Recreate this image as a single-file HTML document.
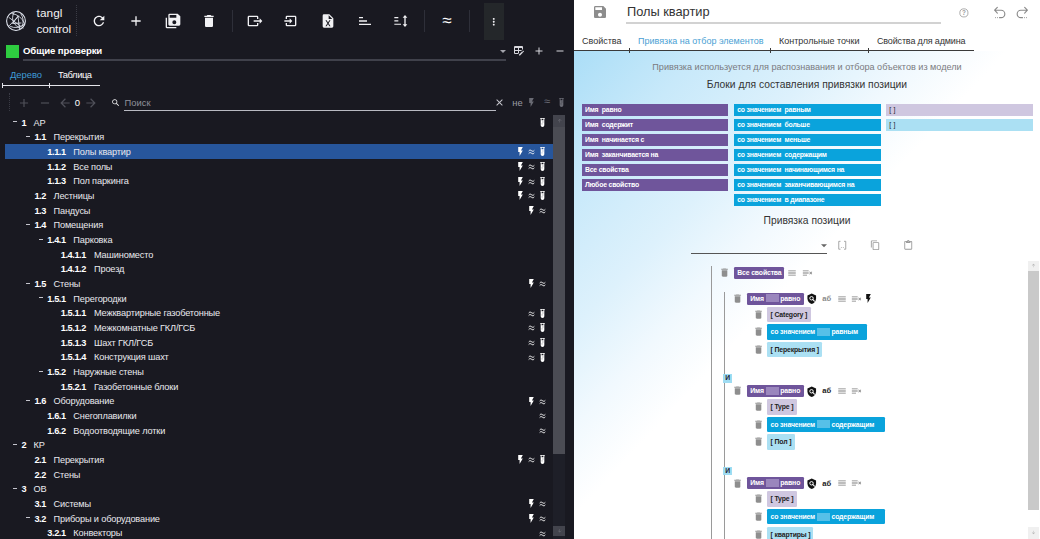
<!DOCTYPE html>
<html lang="ru">
<head>
<meta charset="utf-8">
<title>tangl control</title>
<style>
*{box-sizing:border-box;margin:0;padding:0}
html,body{width:1040px;height:539px;overflow:hidden;background:#191921;font-family:"Liberation Sans",sans-serif;}
.abs{position:absolute}
#left{position:absolute;left:0;top:0;width:574px;height:539px;background:#191921;color:#fff;overflow:hidden}
#right{position:absolute;left:574px;top:0;width:466px;height:539px;background:#fff;overflow:hidden;color:#222}
svg{position:absolute;display:block;overflow:visible}
/* left header */
.logo-t{position:absolute;left:36.5px;font-size:11.8px;color:#f2f2f2;letter-spacing:.1px;line-height:14px;white-space:nowrap}
.vsep{position:absolute;top:10px;width:1px;height:22px;background:#2e2f39}
.tb{position:absolute;top:11px;width:20px;height:20px}
.title{position:absolute;left:23px;top:44.100px;letter-spacing:-.1px;font-size:9.600px;font-weight:bold;color:#fff;line-height:13px;white-space:nowrap}
.tab{position:absolute;top:69.300px;font-size:9.4px;line-height:12px;white-space:nowrap}
/* tree */
.row{position:absolute;left:5px;width:549px;height:14.667px;letter-spacing:-.15px;font-size:9.200px;line-height:14.667px;color:#e9e9ee;white-space:nowrap}
.selbg{position:absolute;left:5px;width:549px;height:15.500px;background:#27569c}
.row b{position:absolute;top:0;margin-left:-5px;font-weight:bold;color:#fff;font-size:9.200px;letter-spacing:-.4px}
.row .lb{position:absolute;top:0;margin-left:-5px;}
.row .ex{position:absolute;top:5.900px;margin-left:-5px;width:4.200px;height:1px;background:#c4c4cc}
.row .ri{top:1.500px;width:11px;height:11px}
.row .ra{position:absolute;top:-.5px;width:11px;text-align:center;font-size:11px;color:#fff}
</style>
</head>
<body>
<div id="left">
  <!-- logo -->
  <svg style="left:5.900px;top:11px;width:20px;height:20px" viewBox="0 0 40 40" fill="none" stroke="#e4e8f2" stroke-width="2.100" stroke-linecap="round">
    <circle cx="20" cy="20" r="18.800"/>
    <path stroke-width="1.700" d="M6 13 L34 34 M7 29 L25 10 M24 11 L13 25 L30 24 M24 11 L27 36 M12 5 Q30 8 37 25 M9 31 Q22 37 36 27 M16 3 Q10 14 16 24 Q20 32 30 35 M30 6 Q37 16 33 30"/>
  </svg>
  <div class="logo-t" style="top:5.800px">tangl</div>
  <div class="logo-t" style="top:21.800px;letter-spacing:-.15px">control</div>
  <div class="abs" style="left:76px;top:5px;width:0;height:31px;border-left:1px dotted #3a3b45"></div>

  <!-- toolbar icons -->
  <svg class="tb" style="left:91px;top:13.100px;width:16px;height:16px" viewBox="0 0 24 24"><path fill="#f1f1f4" d="M17.65 6.35C16.2 4.9 14.21 4 12 4c-4.42 0-7.99 3.58-7.99 8s3.57 8 7.99 8c3.730 0 6.84-2.550 7.730-6h-2.080c-.82 2.330-3.040 4-5.650 4-3.310 0-6-2.690-6-6s2.690-6 6-6c1.660 0 3.140.69 4.220 1.780L13 11h7V4l-2.350 2.350z"/></svg>
  <svg class="tb" style="left:128px;top:13.100px;width:16px;height:16px" viewBox="0 0 24 24"><path fill="#f1f1f4" d="M19 13h-6v6h-2v-6H5v-2h6V5h2v6h6v2z"/></svg>
  <svg class="tb" style="left:164.5px;top:13.100px;width:16px;height:16px" viewBox="0 0 24 24"><path fill="#f1f1f4" d="M17,7V3H7V7H17M14,17A3,3 0 0,0 17,14A3,3 0 0,0 14,11A3,3 0 0,0 11,14A3,3 0 0,0 14,17M19,1L23,5V17A2,2 0 0,1 21,19H7C5.89,19 5,18.1 5,17V3A2,2 0 0,1 7,1H19M1,7H3V21H17V23H3A2,2 0 0,1 1,21V7Z"/></svg>
  <svg class="tb" style="left:201px;top:13.100px;width:16px;height:16px" viewBox="0 0 24 24"><path fill="#f1f1f4" d="M6 19c0 1.100.9 2 2 2h8c1.100 0 2-.9 2-2V7H6v12zM19 4h-3.500l-1-1h-5l-1 1H5v2h14V4z"/></svg>
  <div class="vsep" style="left:232px"></div>
  <svg class="tb" style="left:247px;top:13.100px;width:16px;height:16px" viewBox="0 0 24 24"><path fill="#f1f1f4" d="M23,12L19,8V11H10V13H19V16M1,18V6C1,4.89 1.9,4 3,4H15A2,2 0 0,1 17,6V9H15V6H3V18H15V15H17V18A2,2 0 0,1 15,20H3A2,2 0 0,1 1,18Z"/></svg>
  <svg class="tb" style="left:283px;top:13.100px;width:16px;height:16px" viewBox="0 0 24 24"><path fill="#f1f1f4" d="M14,12L10,8V11H2V13H10V16M20,18V6C20,4.89 19.1,4 18,4H6A2,2 0 0,0 4,6V9H6V6H18V18H6V15H4V18A2,2 0 0,0 6,20H18A2,2 0 0,0 20,18Z"/></svg>
  <svg class="tb" style="left:320px;top:13.100px;width:16px;height:16px" viewBox="0 0 24 24"><path fill="#f1f1f4" d="M14,2H6A2,2 0 0,0 4,4V20A2,2 0 0,0 6,22H18A2,2 0 0,0 20,20V8L14,2M15.8,20H14L12,16.6L10,20H8.2L11.1,15.5L8.2,11H10L12,14.4L14,11H15.8L12.9,15.5L15.8,20M13,9V3.5L18.5,9H13Z"/></svg>
  <svg class="tb" style="left:356.500px;top:13.100px;width:16px;height:16px" viewBox="0 0 24 24"><path fill="#f1f1f4" d="M3 6H9V8H3ZM3 11H15V13H3ZM3 16H21V18H3Z"/></svg>
  <svg class="tb" style="left:393px;top:13.100px;width:16px;height:16px" viewBox="0 0 24 24"><path fill="#f1f1f4" d="M2 6H8V7.800H2ZM2 11H8V12.800H2ZM2 16H12V17.800H2ZM18 3L21.500 7H19V17H21.500L18 21L14.500 17H17V7H14.500Z"/></svg>
  <div class="vsep" style="left:424px"></div>
  <div class="abs" style="left:437px;top:10.900px;width:20px;height:20px;line-height:20px;text-align:center;font-size:17px;color:#fff">≈</div>
  <div class="vsep" style="left:469px"></div>
  <div class="abs" style="left:483.500px;top:2.500px;width:20.500px;height:37px;background:#24272a"></div>
  <svg class="tb" style="left:488.100px;top:15.500px;width:11.500px;height:11.500px" viewBox="0 0 24 24"><path fill="#f1f1f4" d="M12 8c1.100 0 2-.9 2-2s-.9-2-2-2-2 .9-2 2 .9 2 2 2zm0 2c-1.100 0-2 .9-2 2s.9 2 2 2 2-.9 2-2-.9-2-2-2zm0 6c-1.100 0-2 .9-2 2s.9 2 2 2 2-.9 2-2-.9-2-2-2z"/></svg>

  <!-- second row -->
  <div class="abs" style="left:6px;top:44.700px;width:13.300px;height:13.300px;background:#2ecc40"></div>
  <div class="title">Общие проверки</div>
  <div class="abs" style="left:23px;top:59.300px;width:483px;height:1.500px;background:#40414b"></div>
  <svg style="left:500.300px;top:49.600px;width:6px;height:3.200px" viewBox="0 0 10 5"><path fill="#a4a4ac" d="M0 0h10L5 5z"/></svg>
  <svg style="left:512.500px;top:45px;width:12px;height:12px" viewBox="0 0 24 24"><path fill="#d8d8de" d="M21.7,13.350L20.700,14.350L18.650,12.300L19.650,11.300C19.860,11.080 20.210,11.080 20.420,11.300L21.700,12.580C21.920,12.790 21.920,13.140 21.700,13.350M12,18.940L18.070,12.880L20.120,14.930L14.060,21H12V18.940M4,2H18A2,2 0 0,1 20,4V8.170L16.170,12H12V16.170L10.170,18H4A2,2 0 0,1 2,16V4A2,2 0 0,1 4,2M4,6V10H10V6H4M12,6V10H18V6H12M4,12V16H10V12H4Z"/></svg>
  <svg style="left:532.500px;top:45px;width:12px;height:12px" viewBox="0 0 24 24"><path fill="#d8d8de" d="M19 13h-6v6h-2v-6H5v-2h6V5h2v6h6v2z"/></svg>
  <svg style="left:554px;top:45px;width:12px;height:12px" viewBox="0 0 24 24"><path fill="#d8d8de" d="M19 13H5v-2h14v2z"/></svg>

  <!-- tabs -->
  <div class="tab" style="left:10px;color:#3f9bd6">Дерево</div>
  <div class="tab" style="left:58px;color:#fff;letter-spacing:-.45px">Таблица</div>
  <div class="abs" style="left:2px;top:85px;width:97.500px;height:1px;background:#e4e4ea"></div>
  <div class="abs" style="left:2px;top:83px;width:1px;height:5px;background:#e4e4ea"></div>
  <div class="abs" style="left:49px;top:83px;width:1px;height:5px;background:#e4e4ea"></div>

  <!-- tree toolbar -->
  <div class="abs" style="left:9px;top:93px;width:0;height:18px;border-left:1px dotted #3a3b45"></div>
  <svg style="left:17px;top:95.700px;width:14px;height:14px" viewBox="0 0 24 24"><path fill="#50515a" d="M19 13h-6v6h-2v-6H5v-2h6V5h2v6h6v2z"/></svg>
  <svg style="left:37.500px;top:95.700px;width:14px;height:14px" viewBox="0 0 24 24"><path fill="#50515a" d="M19 13H5v-2h14v2z"/></svg>
  <svg style="left:57.500px;top:95.700px;width:14px;height:14px" viewBox="0 0 24 24"><path fill="#50515a" d="M20 11H7.830l5.590-5.590L12 4l-8 8 8 8 1.410-1.410L7.830 13H20v-2z"/></svg>
  <div class="abs" style="left:72.300px;top:96.800px;width:10px;text-align:center;font-size:9.500px;line-height:12px;color:#fff">0</div>
  <svg style="left:83.500px;top:95.700px;width:14px;height:14px" viewBox="0 0 24 24"><path fill="#50515a" d="M12 4l-1.410 1.410L16.170 11H4v2h12.170l-5.580 5.590L12 20l8-8z"/></svg>
  <svg style="left:110.500px;top:98.200px;width:9.500px;height:9.500px" viewBox="0 0 24 24"><path fill="#f1f1f4" d="M15.500 14h-.79l-.28-.27C15.410 12.590 16 11.110 16 9.500 16 5.910 13.090 3 9.500 3S3 5.910 3 9.500 5.910 16 9.500 16c1.610 0 3.090-.59 4.230-1.570l.27.28v.79l5 4.990L20.490 19l-4.990-5zm-6 0C7.010 14 5 11.990 5 9.500S7.010 5 9.500 5 14 7.010 14 9.500 11.990 14 9.500 14z"/></svg>
  <div class="abs" style="left:124.500px;top:96.900px;font-size:9.400px;line-height:12px;color:#8f909a">Поиск</div>
  <div class="abs" style="left:124px;top:109.500px;width:371.500px;height:1px;background:#b9bac2"></div>
  <svg style="left:493.500px;top:97.100px;width:11px;height:11px" viewBox="0 0 24 24"><path fill="#c9c9d0" d="M19 6.410L17.590 5 12 10.590 6.410 5 5 6.410 10.590 12 5 17.590 6.410 19 12 13.410 17.590 19 19 17.590 13.410 12z"/></svg>
  <div class="abs" style="left:512.300px;top:97px;font-size:9.400px;line-height:12px;color:#9a9ba4">не</div>
  <svg style="left:526px;top:96.500px;width:11px;height:11px" viewBox="0 0 24 24"><path fill="#6a6b74" d="M7 2v11h3v9l7-12h-4l4-8z"/></svg>
  <div class="abs" style="left:541.500px;top:95px;width:11px;text-align:center;font-size:11px;line-height:12px;color:#6a6b74">≈</div>
  <svg style="left:555.500px;top:96.500px;width:11px;height:11px" viewBox="0 0 24 24"><path fill="#6a6b74" d="M7,2V4H8V18A4,4 0 0,0 12,22A4,4 0 0,0 16,18V4H17V2H7M11,16C10.400,16 10,15.600 10,15C10,14.400 10.400,14 11,14C11.600,14 12,14.400 12,15C12,15.600 11.600,16 11,16M13,12C12.400,12 12,11.600 12,11C12,10.400 12.400,10 13,10C13.600,10 14,10.400 14,11C14,11.600 13.600,12 13,12M14,7H10V4H14V7Z"/></svg>

  <!-- tree -->
<div class="row" style="top:115.50px"><i class="ex" style="left:13.0px"></i><b style="left:21.6px">1</b><span class="lb" style="left:33.5px">АР</span><svg class="ri" style="left:532.2px" viewBox="0 0 24 24"><path fill="#fff" d="M7,2V4H8V18A4,4 0 0,0 12,22A4,4 0 0,0 16,18V4H17V2H7M11,16C10.4,16 10,15.6 10,15C10,14.4 10.4,14 11,14C11.6,14 12,14.4 12,15C12,15.6 11.6,16 11,16M13,12C12.4,12 12,11.6 12,11C12,10.4 12.4,10 13,10C13.6,10 14,10.4 14,11C14,11.6 13.6,12 13,12M14,7H10V4H14V7Z"/></svg></div>
<div class="row" style="top:130.17px"><i class="ex" style="left:25.5px"></i><b style="left:34.4px">1.1</b><span class="lb" style="left:53.5px">Перекрытия</span></div>
<div class="selbg" style="top:143.98px"></div><div class="row" style="top:144.83px"><b style="left:47.3px">1.1.1</b><span class="lb" style="left:73.3px">Полы квартир</span><svg class="ri" style="left:510.2px" viewBox="0 0 24 24"><path fill="#fff" d="M7 2v11h3v9l7-12h-4l4-8z"/></svg><svg class="ri" style="left:521.2px" viewBox="0 0 11 11" fill="none" stroke="#fff" stroke-width=".950"><path d="M2.700 5C3.500 3.900 4.500 3.900 5.500 4.700S7.500 5.500 8.300 4.400M2.700 7.500C3.500 6.400 4.500 6.400 5.500 7.200S7.500 8 8.300 6.900"/></svg><svg class="ri" style="left:532.2px" viewBox="0 0 24 24"><path fill="#fff" d="M7,2V4H8V18A4,4 0 0,0 12,22A4,4 0 0,0 16,18V4H17V2H7M11,16C10.4,16 10,15.6 10,15C10,14.4 10.4,14 11,14C11.6,14 12,14.4 12,15C12,15.6 11.6,16 11,16M13,12C12.4,12 12,11.6 12,11C12,10.4 12.4,10 13,10C13.6,10 14,10.4 14,11C14,11.6 13.6,12 13,12M14,7H10V4H14V7Z"/></svg></div>
<div class="row" style="top:159.50px"><b style="left:47.3px">1.1.2</b><span class="lb" style="left:73.3px">Все полы</span><svg class="ri" style="left:510.2px" viewBox="0 0 24 24"><path fill="#fff" d="M7 2v11h3v9l7-12h-4l4-8z"/></svg><svg class="ri" style="left:521.2px" viewBox="0 0 11 11" fill="none" stroke="#fff" stroke-width=".950"><path d="M2.700 5C3.500 3.900 4.500 3.900 5.500 4.700S7.500 5.500 8.300 4.400M2.700 7.500C3.500 6.400 4.500 6.400 5.500 7.200S7.500 8 8.300 6.900"/></svg><svg class="ri" style="left:532.2px" viewBox="0 0 24 24"><path fill="#fff" d="M7,2V4H8V18A4,4 0 0,0 12,22A4,4 0 0,0 16,18V4H17V2H7M11,16C10.4,16 10,15.6 10,15C10,14.4 10.4,14 11,14C11.6,14 12,14.4 12,15C12,15.6 11.6,16 11,16M13,12C12.4,12 12,11.6 12,11C12,10.4 12.4,10 13,10C13.6,10 14,10.4 14,11C14,11.6 13.6,12 13,12M14,7H10V4H14V7Z"/></svg></div>
<div class="row" style="top:174.17px"><b style="left:47.3px">1.1.3</b><span class="lb" style="left:73.3px">Пол паркинга</span><svg class="ri" style="left:510.2px" viewBox="0 0 24 24"><path fill="#fff" d="M7 2v11h3v9l7-12h-4l4-8z"/></svg><svg class="ri" style="left:521.2px" viewBox="0 0 11 11" fill="none" stroke="#fff" stroke-width=".950"><path d="M2.700 5C3.500 3.900 4.500 3.900 5.500 4.700S7.500 5.500 8.300 4.400M2.700 7.500C3.500 6.400 4.500 6.400 5.500 7.200S7.500 8 8.300 6.900"/></svg><svg class="ri" style="left:532.2px" viewBox="0 0 24 24"><path fill="#fff" d="M7,2V4H8V18A4,4 0 0,0 12,22A4,4 0 0,0 16,18V4H17V2H7M11,16C10.4,16 10,15.6 10,15C10,14.4 10.4,14 11,14C11.6,14 12,14.4 12,15C12,15.6 11.6,16 11,16M13,12C12.4,12 12,11.6 12,11C12,10.4 12.4,10 13,10C13.6,10 14,10.4 14,11C14,11.6 13.6,12 13,12M14,7H10V4H14V7Z"/></svg></div>
<div class="row" style="top:188.83px"><b style="left:34.4px">1.2</b><span class="lb" style="left:53.5px">Лестницы</span><svg class="ri" style="left:510.2px" viewBox="0 0 24 24"><path fill="#fff" d="M7 2v11h3v9l7-12h-4l4-8z"/></svg><svg class="ri" style="left:521.2px" viewBox="0 0 11 11" fill="none" stroke="#fff" stroke-width=".950"><path d="M2.700 5C3.500 3.900 4.500 3.900 5.500 4.700S7.500 5.500 8.300 4.400M2.700 7.500C3.500 6.400 4.500 6.400 5.500 7.200S7.500 8 8.300 6.900"/></svg><svg class="ri" style="left:532.2px" viewBox="0 0 24 24"><path fill="#fff" d="M7,2V4H8V18A4,4 0 0,0 12,22A4,4 0 0,0 16,18V4H17V2H7M11,16C10.4,16 10,15.6 10,15C10,14.4 10.4,14 11,14C11.6,14 12,14.4 12,15C12,15.6 11.6,16 11,16M13,12C12.4,12 12,11.6 12,11C12,10.4 12.4,10 13,10C13.6,10 14,10.4 14,11C14,11.6 13.6,12 13,12M14,7H10V4H14V7Z"/></svg></div>
<div class="row" style="top:203.50px"><b style="left:34.4px">1.3</b><span class="lb" style="left:53.5px">Пандусы</span><svg class="ri" style="left:521.2px" viewBox="0 0 24 24"><path fill="#fff" d="M7 2v11h3v9l7-12h-4l4-8z"/></svg><svg class="ri" style="left:532.2px" viewBox="0 0 11 11" fill="none" stroke="#fff" stroke-width=".950"><path d="M2.700 5C3.500 3.900 4.500 3.900 5.500 4.700S7.500 5.500 8.300 4.400M2.700 7.500C3.500 6.400 4.500 6.400 5.500 7.200S7.500 8 8.300 6.900"/></svg></div>
<div class="row" style="top:218.17px"><i class="ex" style="left:25.5px"></i><b style="left:34.4px">1.4</b><span class="lb" style="left:53.5px">Помещения</span></div>
<div class="row" style="top:232.84px"><i class="ex" style="left:38.5px"></i><b style="left:47.3px">1.4.1</b><span class="lb" style="left:73.3px">Парковка</span></div>
<div class="row" style="top:247.50px"><b style="left:60.7px">1.4.1.1</b><span class="lb" style="left:94.0px">Машиноместо</span></div>
<div class="row" style="top:262.17px"><b style="left:60.7px">1.4.1.2</b><span class="lb" style="left:94.0px">Проезд</span></div>
<div class="row" style="top:276.84px"><i class="ex" style="left:25.5px"></i><b style="left:34.4px">1.5</b><span class="lb" style="left:53.5px">Стены</span><svg class="ri" style="left:521.2px" viewBox="0 0 24 24"><path fill="#fff" d="M7 2v11h3v9l7-12h-4l4-8z"/></svg><svg class="ri" style="left:532.2px" viewBox="0 0 11 11" fill="none" stroke="#fff" stroke-width=".950"><path d="M2.700 5C3.500 3.900 4.500 3.900 5.500 4.700S7.500 5.500 8.300 4.400M2.700 7.500C3.500 6.400 4.500 6.400 5.500 7.200S7.500 8 8.300 6.900"/></svg></div>
<div class="row" style="top:291.50px"><i class="ex" style="left:38.5px"></i><b style="left:47.3px">1.5.1</b><span class="lb" style="left:73.3px">Перегородки</span></div>
<div class="row" style="top:306.17px"><b style="left:60.7px">1.5.1.1</b><span class="lb" style="left:94.0px">Межквартирные газобетонные</span><svg class="ri" style="left:521.2px" viewBox="0 0 11 11" fill="none" stroke="#fff" stroke-width=".950"><path d="M2.700 5C3.500 3.900 4.500 3.900 5.500 4.700S7.500 5.500 8.300 4.400M2.700 7.500C3.500 6.400 4.500 6.400 5.500 7.200S7.500 8 8.300 6.900"/></svg><svg class="ri" style="left:532.2px" viewBox="0 0 24 24"><path fill="#fff" d="M7,2V4H8V18A4,4 0 0,0 12,22A4,4 0 0,0 16,18V4H17V2H7M11,16C10.4,16 10,15.6 10,15C10,14.4 10.4,14 11,14C11.6,14 12,14.4 12,15C12,15.6 11.6,16 11,16M13,12C12.4,12 12,11.6 12,11C12,10.4 12.4,10 13,10C13.6,10 14,10.4 14,11C14,11.6 13.6,12 13,12M14,7H10V4H14V7Z"/></svg></div>
<div class="row" style="top:320.84px"><b style="left:60.7px">1.5.1.2</b><span class="lb" style="left:94.0px">Межкомнатные ГКЛ/ГСБ</span><svg class="ri" style="left:521.2px" viewBox="0 0 11 11" fill="none" stroke="#fff" stroke-width=".950"><path d="M2.700 5C3.500 3.900 4.500 3.900 5.500 4.700S7.500 5.500 8.300 4.400M2.700 7.500C3.500 6.400 4.500 6.400 5.500 7.200S7.500 8 8.300 6.900"/></svg><svg class="ri" style="left:532.2px" viewBox="0 0 24 24"><path fill="#fff" d="M7,2V4H8V18A4,4 0 0,0 12,22A4,4 0 0,0 16,18V4H17V2H7M11,16C10.4,16 10,15.6 10,15C10,14.4 10.4,14 11,14C11.6,14 12,14.4 12,15C12,15.6 11.6,16 11,16M13,12C12.4,12 12,11.6 12,11C12,10.4 12.4,10 13,10C13.6,10 14,10.4 14,11C14,11.6 13.6,12 13,12M14,7H10V4H14V7Z"/></svg></div>
<div class="row" style="top:335.50px"><b style="left:60.7px">1.5.1.3</b><span class="lb" style="left:94.0px">Шахт ГКЛ/ГСБ</span><svg class="ri" style="left:521.2px" viewBox="0 0 11 11" fill="none" stroke="#fff" stroke-width=".950"><path d="M2.700 5C3.500 3.900 4.500 3.900 5.500 4.700S7.500 5.500 8.300 4.400M2.700 7.500C3.500 6.400 4.500 6.400 5.500 7.200S7.500 8 8.300 6.900"/></svg><svg class="ri" style="left:532.2px" viewBox="0 0 24 24"><path fill="#fff" d="M7,2V4H8V18A4,4 0 0,0 12,22A4,4 0 0,0 16,18V4H17V2H7M11,16C10.4,16 10,15.6 10,15C10,14.4 10.4,14 11,14C11.6,14 12,14.4 12,15C12,15.6 11.6,16 11,16M13,12C12.4,12 12,11.6 12,11C12,10.4 12.4,10 13,10C13.6,10 14,10.4 14,11C14,11.6 13.6,12 13,12M14,7H10V4H14V7Z"/></svg></div>
<div class="row" style="top:350.17px"><b style="left:60.7px">1.5.1.4</b><span class="lb" style="left:94.0px">Конструкция шахт</span><svg class="ri" style="left:521.2px" viewBox="0 0 11 11" fill="none" stroke="#fff" stroke-width=".950"><path d="M2.700 5C3.500 3.900 4.500 3.900 5.500 4.700S7.500 5.500 8.300 4.400M2.700 7.500C3.500 6.400 4.500 6.400 5.500 7.200S7.500 8 8.300 6.900"/></svg><svg class="ri" style="left:532.2px" viewBox="0 0 24 24"><path fill="#fff" d="M7,2V4H8V18A4,4 0 0,0 12,22A4,4 0 0,0 16,18V4H17V2H7M11,16C10.4,16 10,15.6 10,15C10,14.4 10.4,14 11,14C11.6,14 12,14.4 12,15C12,15.6 11.6,16 11,16M13,12C12.4,12 12,11.6 12,11C12,10.4 12.4,10 13,10C13.6,10 14,10.4 14,11C14,11.6 13.6,12 13,12M14,7H10V4H14V7Z"/></svg></div>
<div class="row" style="top:364.84px"><i class="ex" style="left:38.5px"></i><b style="left:47.3px">1.5.2</b><span class="lb" style="left:73.3px">Наружные стены</span></div>
<div class="row" style="top:379.51px"><b style="left:60.7px">1.5.2.1</b><span class="lb" style="left:94.0px">Газобетонные блоки</span></div>
<div class="row" style="top:394.17px"><i class="ex" style="left:25.5px"></i><b style="left:34.4px">1.6</b><span class="lb" style="left:53.5px">Оборудование</span><svg class="ri" style="left:521.2px" viewBox="0 0 24 24"><path fill="#fff" d="M7 2v11h3v9l7-12h-4l4-8z"/></svg><svg class="ri" style="left:532.2px" viewBox="0 0 11 11" fill="none" stroke="#fff" stroke-width=".950"><path d="M2.700 5C3.500 3.900 4.500 3.900 5.500 4.700S7.500 5.500 8.300 4.400M2.700 7.500C3.500 6.400 4.500 6.400 5.500 7.200S7.500 8 8.300 6.900"/></svg></div>
<div class="row" style="top:408.84px"><b style="left:47.3px">1.6.1</b><span class="lb" style="left:73.3px">Снегоплавилки</span><svg class="ri" style="left:532.2px" viewBox="0 0 11 11" fill="none" stroke="#fff" stroke-width=".950"><path d="M2.700 5C3.500 3.900 4.500 3.900 5.500 4.700S7.500 5.500 8.300 4.400M2.700 7.500C3.500 6.400 4.500 6.400 5.500 7.200S7.500 8 8.300 6.900"/></svg></div>
<div class="row" style="top:423.51px"><b style="left:47.3px">1.6.2</b><span class="lb" style="left:73.3px">Водоотводящие лотки</span><svg class="ri" style="left:532.2px" viewBox="0 0 11 11" fill="none" stroke="#fff" stroke-width=".950"><path d="M2.700 5C3.500 3.900 4.500 3.900 5.500 4.700S7.500 5.500 8.300 4.400M2.700 7.500C3.500 6.400 4.500 6.400 5.500 7.200S7.500 8 8.300 6.900"/></svg></div>
<div class="row" style="top:438.17px"><i class="ex" style="left:13.0px"></i><b style="left:21.6px">2</b><span class="lb" style="left:33.5px">КР</span></div>
<div class="row" style="top:452.84px"><b style="left:34.4px">2.1</b><span class="lb" style="left:53.5px">Перекрытия</span><svg class="ri" style="left:510.2px" viewBox="0 0 24 24"><path fill="#fff" d="M7 2v11h3v9l7-12h-4l4-8z"/></svg><svg class="ri" style="left:521.2px" viewBox="0 0 11 11" fill="none" stroke="#fff" stroke-width=".950"><path d="M2.700 5C3.500 3.900 4.500 3.900 5.500 4.700S7.500 5.500 8.300 4.400M2.700 7.500C3.500 6.400 4.500 6.400 5.500 7.200S7.500 8 8.300 6.900"/></svg><svg class="ri" style="left:532.2px" viewBox="0 0 24 24"><path fill="#fff" d="M7,2V4H8V18A4,4 0 0,0 12,22A4,4 0 0,0 16,18V4H17V2H7M11,16C10.4,16 10,15.6 10,15C10,14.4 10.4,14 11,14C11.6,14 12,14.4 12,15C12,15.6 11.6,16 11,16M13,12C12.4,12 12,11.6 12,11C12,10.4 12.4,10 13,10C13.6,10 14,10.4 14,11C14,11.6 13.6,12 13,12M14,7H10V4H14V7Z"/></svg></div>
<div class="row" style="top:467.51px"><b style="left:34.4px">2.2</b><span class="lb" style="left:53.5px">Стены</span></div>
<div class="row" style="top:482.18px"><i class="ex" style="left:13.0px"></i><b style="left:21.6px">3</b><span class="lb" style="left:33.5px">ОВ</span></div>
<div class="row" style="top:496.84px"><b style="left:34.4px">3.1</b><span class="lb" style="left:53.5px">Системы</span><svg class="ri" style="left:521.2px" viewBox="0 0 24 24"><path fill="#fff" d="M7 2v11h3v9l7-12h-4l4-8z"/></svg><svg class="ri" style="left:532.2px" viewBox="0 0 11 11" fill="none" stroke="#fff" stroke-width=".950"><path d="M2.700 5C3.500 3.900 4.500 3.900 5.500 4.700S7.500 5.500 8.300 4.400M2.700 7.500C3.500 6.400 4.500 6.400 5.500 7.200S7.500 8 8.300 6.900"/></svg></div>
<div class="row" style="top:511.51px"><i class="ex" style="left:25.5px"></i><b style="left:34.4px">3.2</b><span class="lb" style="left:53.5px">Приборы и оборудование</span><svg class="ri" style="left:521.2px" viewBox="0 0 24 24"><path fill="#fff" d="M7 2v11h3v9l7-12h-4l4-8z"/></svg><svg class="ri" style="left:532.2px" viewBox="0 0 11 11" fill="none" stroke="#fff" stroke-width=".950"><path d="M2.700 5C3.500 3.900 4.500 3.900 5.500 4.700S7.500 5.500 8.300 4.400M2.700 7.500C3.500 6.400 4.500 6.400 5.500 7.200S7.500 8 8.300 6.900"/></svg></div>
<div class="row" style="top:526.18px"><b style="left:47.3px">3.2.1</b><span class="lb" style="left:73.3px">Конвекторы</span><svg class="ri" style="left:532.2px" viewBox="0 0 11 11" fill="none" stroke="#fff" stroke-width=".950"><path d="M2.700 5C3.500 3.900 4.500 3.900 5.500 4.700S7.500 5.500 8.300 4.400M2.700 7.500C3.500 6.400 4.500 6.400 5.500 7.200S7.500 8 8.300 6.900"/></svg></div>

  <!-- scrollbar -->
  <div class="abs" style="left:553.300px;top:114.500px;width:11.700px;height:424.500px;background:#1e1f28"></div>
  <div class="abs" style="left:553.300px;top:114.500px;width:11.700px;height:12.300px;background:#43444d"></div>
  <svg style="left:556.500px;top:118px;width:5.500px;height:5.500px" viewBox="0 0 24 24"><path fill="#6d6e77" d="M4 12l1.410 1.410L11 7.830V20h2V7.830l5.580 5.590L20 12l-8-8-8 8z"/></svg>
  <div class="abs" style="left:553.300px;top:126.800px;width:11.700px;height:326.800px;background:#4b4c54"></div>
  <div class="abs" style="left:553.300px;top:525.500px;width:11.700px;height:10.800px;background:#43444d"></div>
  <svg style="left:556.500px;top:528px;width:5.500px;height:5.500px" viewBox="0 0 24 24"><path fill="#6d6e77" d="M20 12l-1.410-1.410L13 16.170V4h-2v12.170l-5.580-5.590L4 12l8 8 8-8z"/></svg>
</div>

<div id="right">
<style>
#right .hdr{position:absolute;left:0;top:0;width:466px;height:50px;background:#fff}
#right .grad{position:absolute;left:0;top:50.500px;width:466px;height:489px;background:linear-gradient(133deg,#abdef7 0%,#c8e9fa 14%,#ddf1fc 28%,#f1f9fe 38%,#ffffff 47%)}
#right .fade{position:absolute;left:0;top:50.500px;width:466px;height:489px;background:linear-gradient(180deg,rgba(255,255,255,0) 0%,rgba(255,255,255,0) 35%,rgba(255,255,255,.75) 100%)}
.rtab{position:absolute;top:35px;font-size:9px;line-height:12px;white-space:nowrap;color:#333}
.blk{position:absolute;height:11.700px;font-size:6.900px;line-height:12.400px;font-weight:bold;color:#fff;white-space:pre;padding-left:3.200px;letter-spacing:-.2px}
.pu{background:#6f559b}.cy{background:#0aa3dc}
.chip{position:absolute;border-radius:1.200px;font-size:6.900px;font-weight:bold;color:#fff;white-space:pre;padding-left:3.500px;letter-spacing:-.15px}
.lpu{background:#cfc7e0;color:#222}.lcy{background:#abe0f3;color:#222}
.hole{display:inline-block;width:13px;height:8px;vertical-align:-1.700px;margin:0 1.700px}
.pu .hole{background:#9a86bd}.cy .hole{background:#56c0e8}
.tr{width:11.100px;height:11.100px}
.mi{width:10px;height:10px}
</style>
<div class="hdr"></div>
<div class="grad"></div>
<!-- header -->
<svg style="left:18px;top:4px;width:16px;height:16px" viewBox="0 0 24 24"><path fill="#8d8d8d" d="M17 3H5c-1.110 0-2 .9-2 2v14c0 1.100.89 2 2 2h14c1.100 0 2-.9 2-2V7l-4-4zm-5 16c-1.660 0-3-1.340-3-3s1.340-3 3-3 3 1.340 3 3-1.340 3-3 3zm3-10H5V5h10v4z"/></svg>
<div class="abs" style="left:53px;top:3.500px;font-size:12.800px;line-height:16px;color:#333;white-space:nowrap">Полы квартир</div>
<div class="abs" style="left:52px;top:22.300px;width:315px;height:1.400px;background:#d2d2d2"></div>
<svg style="left:385.200px;top:7.700px;width:9.800px;height:9.800px" viewBox="0 0 24 24"><circle cx="12" cy="12" r="10" fill="none" stroke="#9a9a9a" stroke-width="2"/><text x="12" y="17.500" font-size="15.500" font-weight="bold" font-family="Liberation Sans, sans-serif" text-anchor="middle" fill="#9a9a9a">?</text></svg>
<svg style="left:418.800px;top:5.800px;width:13px;height:13px" viewBox="0 0 24 24" fill="none" stroke="#8a8a8a" stroke-width="2.100" stroke-linecap="round" stroke-linejoin="round"><path d="M8 2.500 L3 7.800 L8 13.100 M3 7.800 H15 A6.850 6.850 0 0 1 15 21.500 H12"/><path d="M4.500 21.500h.1M8.300 21.500h.1" stroke-width="1.800"/></svg>
<svg style="left:442.300px;top:5.800px;width:13px;height:13px" viewBox="0 0 24 24" fill="none" stroke="#8a8a8a" stroke-width="2.100" stroke-linecap="round" stroke-linejoin="round"><path d="M16 2.500 L21 7.800 L16 13.100 M21 7.800 H9 A6.850 6.850 0 0 0 9 21.500 H12"/><path d="M19.500 21.500h.1M15.700 21.500h.1" stroke-width="1.800"/></svg>
<!-- tabs -->
<div class="rtab" style="left:8px">Свойства</div>
<div class="rtab" style="left:64px;color:#4a9fd4">Привязка на отбор элементов</div>
<div class="rtab" style="left:205px">Контрольные точки</div>
<div class="rtab" style="left:303px;letter-spacing:-.16px">Свойства для админа</div>
<div class="abs" style="left:0;top:49.700px;width:400px;height:1px;background:#3a3a3a"></div>
<div class="abs" style="left:55px;top:47.500px;width:1px;height:5px;background:#3a3a3a"></div>
<div class="abs" style="left:196px;top:47.500px;width:1px;height:5px;background:#3a3a3a"></div>
<div class="abs" style="left:294px;top:47.500px;width:1px;height:5px;background:#3a3a3a"></div>
<!-- info -->
<div class="abs" style="left:0;top:61.200px;width:466px;text-align:center;font-size:9.100px;line-height:12px;color:#7a7a80;white-space:nowrap">Привязка используется для распознавания и отбора объектов из модели</div>
<div class="abs" style="left:0;top:77.500px;width:466px;text-align:center;font-size:10.300px;line-height:14px;color:#333;white-space:nowrap">Блоки для составления привязки позиции</div>
<!-- blocks col1 -->
<div class="blk pu" style="left:7.700px;top:104.200px;width:146.300px">Имя  равно</div>
<div class="blk pu" style="left:7.700px;top:119.150px;width:146.300px">Имя  содержит</div>
<div class="blk pu" style="left:7.700px;top:134.100px;width:146.300px">Имя  начинается с</div>
<div class="blk pu" style="left:7.700px;top:149.050px;width:146.300px">Имя  заканчивается на</div>
<div class="blk pu" style="left:7.700px;top:164px;width:146.300px">Все свойства</div>
<div class="blk pu" style="left:7.700px;top:178.950px;width:146.300px">Любое свойство</div>
<!-- blocks col2 -->
<div class="blk cy" style="left:160px;top:104.200px;width:146.700px">со значением  равным</div>
<div class="blk cy" style="left:160px;top:119.150px;width:146.700px">со значением  больше</div>
<div class="blk cy" style="left:160px;top:134.100px;width:146.700px">со значением  меньше</div>
<div class="blk cy" style="left:160px;top:149.050px;width:146.700px">со значением  содержащим</div>
<div class="blk cy" style="left:160px;top:164px;width:146.700px">со значением  начинающимся на</div>
<div class="blk cy" style="left:160px;top:178.950px;width:146.700px">со значением  заканчивающимся на</div>
<div class="blk cy" style="left:160px;top:193.900px;width:146.700px">со значением  в диапазоне</div>
<!-- blocks col3 -->
<div class="blk lpu" style="left:312px;top:104.200px;width:147.400px;font-weight:normal;word-spacing:1px">[ ]</div>
<div class="blk lcy" style="left:312px;top:119.150px;width:147.400px;font-weight:normal;word-spacing:1px">[ ]</div>
<!-- title 2 -->
<div class="abs" style="left:0;top:214px;width:466px;text-align:center;font-size:10.300px;line-height:14px;color:#333;white-space:nowrap">Привязка позиции</div>
<div class="abs" style="left:117px;top:252.800px;width:135.700px;height:1px;background:#555"></div>
<svg style="left:246.500px;top:243.800px;width:6px;height:3.500px" viewBox="0 0 10 5"><path fill="#666" d="M0 0h10L5 5z"/></svg>
<svg style="left:263px;top:240px;width:10.500px;height:10.500px" viewBox="0 0 24 24" fill="none" stroke="#9a9a9a" stroke-width="2"><path d="M8 3H4V21H8M16 3H20V21H16"/><path d="M9 17h1.500M13.500 17h1.500" stroke-width="2.400"/></svg>
<svg style="left:296px;top:240px;width:10.500px;height:10.500px" viewBox="0 0 24 24"><path fill="#9a9a9a" d="M16 1H4c-1.100 0-2 .9-2 2v14h2V3h12V1zm3 4H8c-1.100 0-2 .9-2 2v14c0 1.100.9 2 2 2h11c1.100 0 2-.9 2-2V7c0-1.100-.9-2-2-2zm0 16H8V7h11v14z"/></svg>
<svg style="left:328.500px;top:239.500px;width:10.500px;height:10.500px" viewBox="0 0 24 24"><path fill="#9a9a9a" d="M19 2h-4.180C14.400.84 13.300 0 12 0c-1.300 0-2.400.84-2.820 2H5c-1.100 0-2 .9-2 2v16c0 1.100.9 2 2 2h14c1.100 0 2-.9 2-2V4c0-1.100-.9-2-2-2zm-7 0c.55 0 1 .45 1 1s-.45 1-1 1-1-.45-1-1 .45-1 1-1zm7 18H5V4h2v3h10V4h2v16z"/></svg>
<div class="abs" style="left:137.200px;top:266px;width:1px;height:273px;background:#9a9a9a"></div>
<div class="abs" style="left:149.700px;top:292px;width:1px;height:247px;background:#9a9a9a"></div>
<svg class="tr" style="left:145.2px;top:266.9px" viewBox="0 0 24 24"><path fill="#8e8e8e" d="M6 19c0 1.100.9 2 2 2h8c1.100 0 2-.9 2-2V7H6v12zM19 4h-3.500l-1-1h-5l-1 1H5v2h14V4z"/></svg>
<div class="chip pu" style="left:159.700px;top:267px;width:50.100px;height:11.800px;line-height:11.800px">Все свойства</div>
<svg class="mi" style="left:213.0px;top:267.6px" viewBox="0 0 24 24"><path fill="#7c7c7c" d="M3 18h18v-2H3v2zm0-5h18v-2H3v2zm0-7v2h18V6H3z"/></svg>
<svg class="mi" style="left:227.7px;top:267.6px" viewBox="0 0 24 24"><path fill="#7c7c7c" d="M2 6h14v2H2zM2 11h14v2H2zM2 16h10v2H2zM17.500 9.500l1.200-1.200 2.300 2.400 2.300-2.400 1.200 1.200-2.300 2.500 2.300 2.500-1.200 1.200-2.300-2.400-2.300 2.400-1.200-1.200 2.300-2.500z"/></svg>
<svg class="tr" style="left:158.0px;top:292.9px" viewBox="0 0 24 24"><path fill="#8e8e8e" d="M6 19c0 1.100.9 2 2 2h8c1.100 0 2-.9 2-2V7H6v12zM19 4h-3.500l-1-1h-5l-1 1H5v2h14V4z"/></svg>
<div class="chip pu" style="left:172.800px;top:292.7px;width:57.400px;height:11.900px;line-height:11.900px">Имя<span class="hole"></span>равно</div>
<svg style="left:232.4px;top:293.2px;width:11.500px;height:11.500px" viewBox="0 0 24 24"><path fill="#111" d="M12 1L3 5v6c0 5.550 3.840 10.740 9 12 5.160-1.260 9-6.450 9-12V5l-9-4z"/><circle cx="11.500" cy="11" r="3.600" fill="none" stroke="#fff" stroke-width="2"/><path d="M14 13.500l3.500 3.500" stroke="#fff" stroke-width="2.200" stroke-linecap="round"/></svg>
<div class="abs" style="left:247.700px;top:293.8px;width:10px;text-align:center;font-size:7.600px;font-weight:bold;line-height:10px;color:#8a8a8a">аб</div>
<svg class="mi" style="left:262.5px;top:293.6px" viewBox="0 0 24 24"><path fill="#7c7c7c" d="M3 18h18v-2H3v2zm0-5h18v-2H3v2zm0-7v2h18V6H3z"/></svg>
<svg class="mi" style="left:277.2px;top:293.6px" viewBox="0 0 24 24"><path fill="#7c7c7c" d="M2 6h14v2H2zM2 11h14v2H2zM2 16h10v2H2zM17.500 9.500l1.200-1.200 2.300 2.400 2.300-2.400 1.200 1.200-2.300 2.500 2.300 2.500-1.200 1.200-2.300-2.400-2.300 2.400-1.200-1.200 2.300-2.500z"/></svg>
<svg style="left:289.3px;top:293.1px;width:11px;height:11px" viewBox="0 0 24 24"><path fill="#111" d="M7 2v11h3v9l7-12h-4l4-8z"/></svg>
<svg class="tr" style="left:178.6px;top:308.7px" viewBox="0 0 24 24"><path fill="#8e8e8e" d="M6 19c0 1.100.9 2 2 2h8c1.100 0 2-.9 2-2V7H6v12zM19 4h-3.500l-1-1h-5l-1 1H5v2h14V4z"/></svg>
<div class="chip lpu" style="left:193.100px;top:306.6px;width:44.0px;height:15.600px;line-height:15.600px">[ Category ]</div>
<svg class="tr" style="left:178.6px;top:326.3px" viewBox="0 0 24 24"><path fill="#8e8e8e" d="M6 19c0 1.100.9 2 2 2h8c1.100 0 2-.9 2-2V7H6v12zM19 4h-3.500l-1-1h-5l-1 1H5v2h14V4z"/></svg>
<div class="chip cy" style="left:193.100px;top:324.2px;width:99.7px;height:15.600px;line-height:15.600px">со значением<span class="hole"></span>равным</div>
<svg class="tr" style="left:178.6px;top:344.0px" viewBox="0 0 24 24"><path fill="#8e8e8e" d="M6 19c0 1.100.9 2 2 2h8c1.100 0 2-.9 2-2V7H6v12zM19 4h-3.500l-1-1h-5l-1 1H5v2h14V4z"/></svg>
<div class="chip lcy" style="left:193.100px;top:341.9px;width:54.6px;height:15.600px;line-height:15.600px">[ Перекрытия ]</div>
<div class="abs" style="left:149px;top:374.3px;width:9.300px;height:8.300px;background:#9fdcf2;color:#223;font-size:6.800px;font-weight:bold;line-height:8.300px;text-align:center">И</div>
<svg class="tr" style="left:158.0px;top:385.3px" viewBox="0 0 24 24"><path fill="#8e8e8e" d="M6 19c0 1.100.9 2 2 2h8c1.100 0 2-.9 2-2V7H6v12zM19 4h-3.500l-1-1h-5l-1 1H5v2h14V4z"/></svg>
<div class="chip pu" style="left:172.800px;top:385.1px;width:57.400px;height:11.900px;line-height:11.900px">Имя<span class="hole"></span>равно</div>
<svg style="left:232.4px;top:385.6px;width:11.500px;height:11.500px" viewBox="0 0 24 24"><path fill="#111" d="M12 1L3 5v6c0 5.550 3.840 10.740 9 12 5.160-1.260 9-6.450 9-12V5l-9-4z"/><circle cx="11.500" cy="11" r="3.600" fill="none" stroke="#fff" stroke-width="2"/><path d="M14 13.500l3.500 3.500" stroke="#fff" stroke-width="2.200" stroke-linecap="round"/></svg>
<div class="abs" style="left:247.700px;top:386.2px;width:10px;text-align:center;font-size:7.600px;font-weight:bold;line-height:10px;color:#222">аб</div>
<svg class="mi" style="left:262.5px;top:386.0px" viewBox="0 0 24 24"><path fill="#7c7c7c" d="M3 18h18v-2H3v2zm0-5h18v-2H3v2zm0-7v2h18V6H3z"/></svg>
<svg class="mi" style="left:277.2px;top:386.0px" viewBox="0 0 24 24"><path fill="#7c7c7c" d="M2 6h14v2H2zM2 11h14v2H2zM2 16h10v2H2zM17.500 9.500l1.200-1.200 2.300 2.400 2.300-2.400 1.200 1.200-2.300 2.500 2.300 2.500-1.200 1.200-2.300-2.400-2.300 2.400-1.200-1.200 2.300-2.500z"/></svg>
<svg class="tr" style="left:178.6px;top:401.1px" viewBox="0 0 24 24"><path fill="#8e8e8e" d="M6 19c0 1.100.9 2 2 2h8c1.100 0 2-.9 2-2V7H6v12zM19 4h-3.500l-1-1h-5l-1 1H5v2h14V4z"/></svg>
<div class="chip lpu" style="left:193.100px;top:399.0px;width:29.6px;height:15.600px;line-height:15.600px">[ Type ]</div>
<svg class="tr" style="left:178.6px;top:418.7px" viewBox="0 0 24 24"><path fill="#8e8e8e" d="M6 19c0 1.100.9 2 2 2h8c1.100 0 2-.9 2-2V7H6v12zM19 4h-3.500l-1-1h-5l-1 1H5v2h14V4z"/></svg>
<div class="chip cy" style="left:193.100px;top:416.6px;width:118.2px;height:15.600px;line-height:15.600px">со значением<span class="hole"></span>содержащим</div>
<svg class="tr" style="left:178.6px;top:436.4px" viewBox="0 0 24 24"><path fill="#8e8e8e" d="M6 19c0 1.100.9 2 2 2h8c1.100 0 2-.9 2-2V7H6v12zM19 4h-3.500l-1-1h-5l-1 1H5v2h14V4z"/></svg>
<div class="chip lcy" style="left:193.100px;top:434.3px;width:27.7px;height:15.600px;line-height:15.600px">[ Пол ]</div>
<div class="abs" style="left:149px;top:466.6px;width:9.300px;height:8.300px;background:#9fdcf2;color:#223;font-size:6.800px;font-weight:bold;line-height:8.300px;text-align:center">И</div>
<svg class="tr" style="left:158.0px;top:477.6px" viewBox="0 0 24 24"><path fill="#8e8e8e" d="M6 19c0 1.100.9 2 2 2h8c1.100 0 2-.9 2-2V7H6v12zM19 4h-3.500l-1-1h-5l-1 1H5v2h14V4z"/></svg>
<div class="chip pu" style="left:172.800px;top:477.4px;width:57.400px;height:11.900px;line-height:11.900px">Имя<span class="hole"></span>равно</div>
<svg style="left:232.4px;top:477.9px;width:11.500px;height:11.500px" viewBox="0 0 24 24"><path fill="#111" d="M12 1L3 5v6c0 5.550 3.840 10.740 9 12 5.160-1.260 9-6.450 9-12V5l-9-4z"/><circle cx="11.500" cy="11" r="3.600" fill="none" stroke="#fff" stroke-width="2"/><path d="M14 13.500l3.500 3.500" stroke="#fff" stroke-width="2.200" stroke-linecap="round"/></svg>
<div class="abs" style="left:247.700px;top:478.5px;width:10px;text-align:center;font-size:7.600px;font-weight:bold;line-height:10px;color:#222">аб</div>
<svg class="mi" style="left:262.5px;top:478.3px" viewBox="0 0 24 24"><path fill="#7c7c7c" d="M3 18h18v-2H3v2zm0-5h18v-2H3v2zm0-7v2h18V6H3z"/></svg>
<svg class="mi" style="left:277.2px;top:478.3px" viewBox="0 0 24 24"><path fill="#7c7c7c" d="M2 6h14v2H2zM2 11h14v2H2zM2 16h10v2H2zM17.500 9.500l1.200-1.200 2.300 2.400 2.300-2.400 1.200 1.200-2.300 2.500 2.300 2.500-1.200 1.200-2.300-2.400-2.300 2.400-1.200-1.200 2.300-2.500z"/></svg>
<svg class="tr" style="left:178.6px;top:493.4px" viewBox="0 0 24 24"><path fill="#8e8e8e" d="M6 19c0 1.100.9 2 2 2h8c1.100 0 2-.9 2-2V7H6v12zM19 4h-3.500l-1-1h-5l-1 1H5v2h14V4z"/></svg>
<div class="chip lpu" style="left:193.100px;top:491.3px;width:29.6px;height:15.600px;line-height:15.600px">[ Type ]</div>
<svg class="tr" style="left:178.6px;top:511.0px" viewBox="0 0 24 24"><path fill="#8e8e8e" d="M6 19c0 1.100.9 2 2 2h8c1.100 0 2-.9 2-2V7H6v12zM19 4h-3.500l-1-1h-5l-1 1H5v2h14V4z"/></svg>
<div class="chip cy" style="left:193.100px;top:508.9px;width:118.2px;height:15.600px;line-height:15.600px">со значением<span class="hole"></span>содержащим</div>
<svg class="tr" style="left:178.6px;top:528.7px" viewBox="0 0 24 24"><path fill="#8e8e8e" d="M6 19c0 1.100.9 2 2 2h8c1.100 0 2-.9 2-2V7H6v12zM19 4h-3.500l-1-1h-5l-1 1H5v2h14V4z"/></svg>
<div class="chip lcy" style="left:193.100px;top:526.6px;width:46.2px;height:15.600px;line-height:15.600px">[ квартиры ]</div>
<!-- right scrollbar -->
<div class="abs" style="left:453.600px;top:260.500px;width:11px;height:10px;background:#f0f0f0"></div>
<svg style="left:456.500px;top:263px;width:5px;height:5px" viewBox="0 0 24 24"><path fill="#b0b0b0" d="M4 12l1.410 1.410L11 7.830V20h2V7.830l5.580 5.590L20 12l-8-8-8 8z"/></svg>
<div class="abs" style="left:453.600px;top:270.500px;width:11px;height:239.500px;background:#c9c9c9"></div>
<div class="abs" style="left:453.600px;top:527px;width:11px;height:12px;background:#f0f0f0"></div>
<svg style="left:456.500px;top:530px;width:5px;height:5px" viewBox="0 0 24 24"><path fill="#b0b0b0" d="M20 12l-1.410-1.410L13 16.170V4h-2v12.170l-5.580-5.590L4 12l8 8 8-8z"/></svg>

</div>
</body>
</html>
